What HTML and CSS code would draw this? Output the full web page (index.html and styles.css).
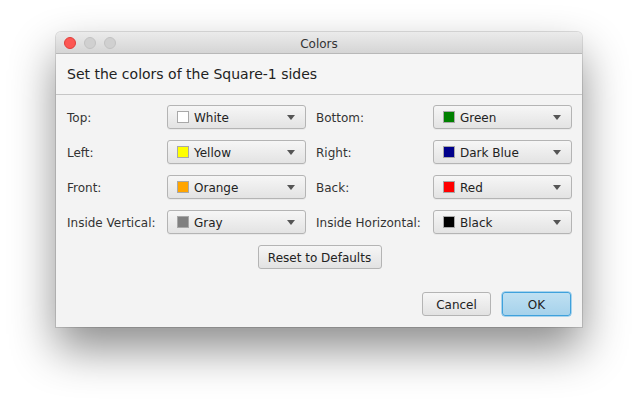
FILE: index.html
```html
<!DOCTYPE html>
<html>
<head>
<meta charset="utf-8">
<link rel="stylesheet" href="styles.css">
</head>
<body>
<div class="window">
  <div class="titlebar">
    <div class="lights">
      <span class="light red"></span>
      <span class="light gray"></span>
      <span class="light gray"></span>
    </div>
    <div class="title">Colors</div>
  </div>
  <div class="header">Set the colors of the Square-1 sides</div>
  <div class="content">
    <div class="grid">
      <div class="label">Top:</div>
      <div class="combo"><span class="swatch" style="background:#ffffff"></span><span class="ctext">White</span><span class="arrow"></span></div>
      <div class="label">Bottom:</div>
      <div class="combo"><span class="swatch" style="background:#008000"></span><span class="ctext">Green</span><span class="arrow"></span></div>

      <div class="label">Left:</div>
      <div class="combo"><span class="swatch" style="background:#ffff00"></span><span class="ctext">Yellow</span><span class="arrow"></span></div>
      <div class="label">Right:</div>
      <div class="combo"><span class="swatch" style="background:#00008b"></span><span class="ctext">Dark Blue</span><span class="arrow"></span></div>

      <div class="label">Front:</div>
      <div class="combo"><span class="swatch" style="background:#ffa500"></span><span class="ctext">Orange</span><span class="arrow"></span></div>
      <div class="label">Back:</div>
      <div class="combo"><span class="swatch" style="background:#ff0000"></span><span class="ctext">Red</span><span class="arrow"></span></div>

      <div class="label">Inside Vertical:</div>
      <div class="combo"><span class="swatch" style="background:#808080"></span><span class="ctext">Gray</span><span class="arrow"></span></div>
      <div class="label">Inside Horizontal:</div>
      <div class="combo"><span class="swatch" style="background:#000000"></span><span class="ctext">Black</span><span class="arrow"></span></div>
    </div>
    <div class="reset-row">
      <button class="btn reset">Reset to Defaults</button>
    </div>
    <div class="actions">
      <button class="btn action">Cancel</button>
      <button class="btn action ok">OK</button>
    </div>
  </div>
</div>
</body>
</html>
```
FILE: styles.css
```css
html, body {
  margin: 0;
  padding: 0;
  background: #ffffff;
}
html {
  height: 100%;
}
body {
  min-height: 100%;
  box-sizing: border-box;
  padding: 32px 0 0 56px;
  font-family: "DejaVu Sans", "Liberation Sans", sans-serif;
  color: #222;
}
.window {
  width: 526px;
  height: 295px;
  background: #f3f3f3;
  border-radius: 5px 5px 0 0;
  box-shadow: 0 0 0 1px rgba(0,0,0,0.12), 0 22px 45px rgba(0,0,0,0.45);
  display: flex;
  flex-direction: column;
  overflow: hidden;
}
.titlebar {
  height: 21px;
  flex: none;
  border-bottom: 1px solid #b8b8b8;
  background: linear-gradient(#ebebeb, #d5d5d5);
  position: relative;
  display: flex;
  align-items: center;
  justify-content: center;
}
.lights {
  position: absolute;
  left: 8px;
  top: 5px;
  display: flex;
  gap: 8px;
}
.light {
  width: 12px;
  height: 12px;
  border-radius: 50%;
  box-sizing: border-box;
}
.light.red {
  background: #fc5753;
  border: 1px solid #df3e3a;
}
.light.gray {
  background: #d0d0d0;
  border: 1px solid #c2c2c2;
}
.title {
  font-size: 12px;
  color: #333;
  padding-top: 2px;
}
.header {
  height: 41px;
  flex: none;
  box-sizing: border-box;
  padding: 12px 0 0 11px;
  font-size: 14px;
  color: #222;
  background: #f5f5f5;
  border-bottom: 1px solid #c6c6c6;
}
.content {
  flex: 1;
  display: flex;
  flex-direction: column;
  padding: 10px 10px 11px 11px;
}
.grid {
  display: grid;
  grid-template-columns: 100px 139px 127px 139px;
  grid-auto-rows: 24px;
  row-gap: 11px;
}
.grid .label:nth-child(4n+3) {
  padding-left: 10px;
}
.label {
  font-size: 12px;
  line-height: 24px;
  padding-top: 1px;
  color: #333;
  white-space: nowrap;
}
.combo {
  height: 24px;
  box-sizing: border-box;
  border: 1px solid #b4b4b4;
  border-radius: 3px;
  background: linear-gradient(#f6f6f6, #e3e3e3);
  display: flex;
  align-items: center;
  padding: 0 10px 0 9px;
  box-shadow: 0 1px 0 rgba(0,0,0,0.04);
}
.swatch {
  width: 12px;
  height: 12px;
  box-sizing: border-box;
  border: 1px solid #a8a8a8;
  flex: none;
}
.ctext {
  font-size: 12px;
  color: #222;
  margin-left: 5px;
  flex: 1;
  padding-top: 1px;
}
.arrow {
  width: 0;
  height: 0;
  border-left: 4.5px solid transparent;
  border-right: 4.5px solid transparent;
  border-top: 5px solid #555;
  margin-top: 1px;
}
.btn {
  font-family: "DejaVu Sans", "Liberation Sans", sans-serif;
  font-size: 12px;
  color: #222;
  height: 24px;
  box-sizing: border-box;
  border: 1px solid #b4b4b4;
  border-radius: 3px;
  background: linear-gradient(#f6f6f6, #e2e2e2);
  padding: 1px 0 0;
  margin: 0;
}
.reset-row {
  display: flex;
  justify-content: center;
  margin-top: 11px;
}
.reset {
  width: 124px;
}
.actions {
  margin-top: auto;
  display: flex;
  justify-content: flex-end;
  gap: 11px;
  padding-right: 1px;
}
.action {
  width: 69px;
}
.ok {
  border-color: #3fa1dc;
  background: linear-gradient(#bfe0f2, #a6d2eb);
  box-shadow: 0 0 0 0.5px #5fb3e6;
}
```
